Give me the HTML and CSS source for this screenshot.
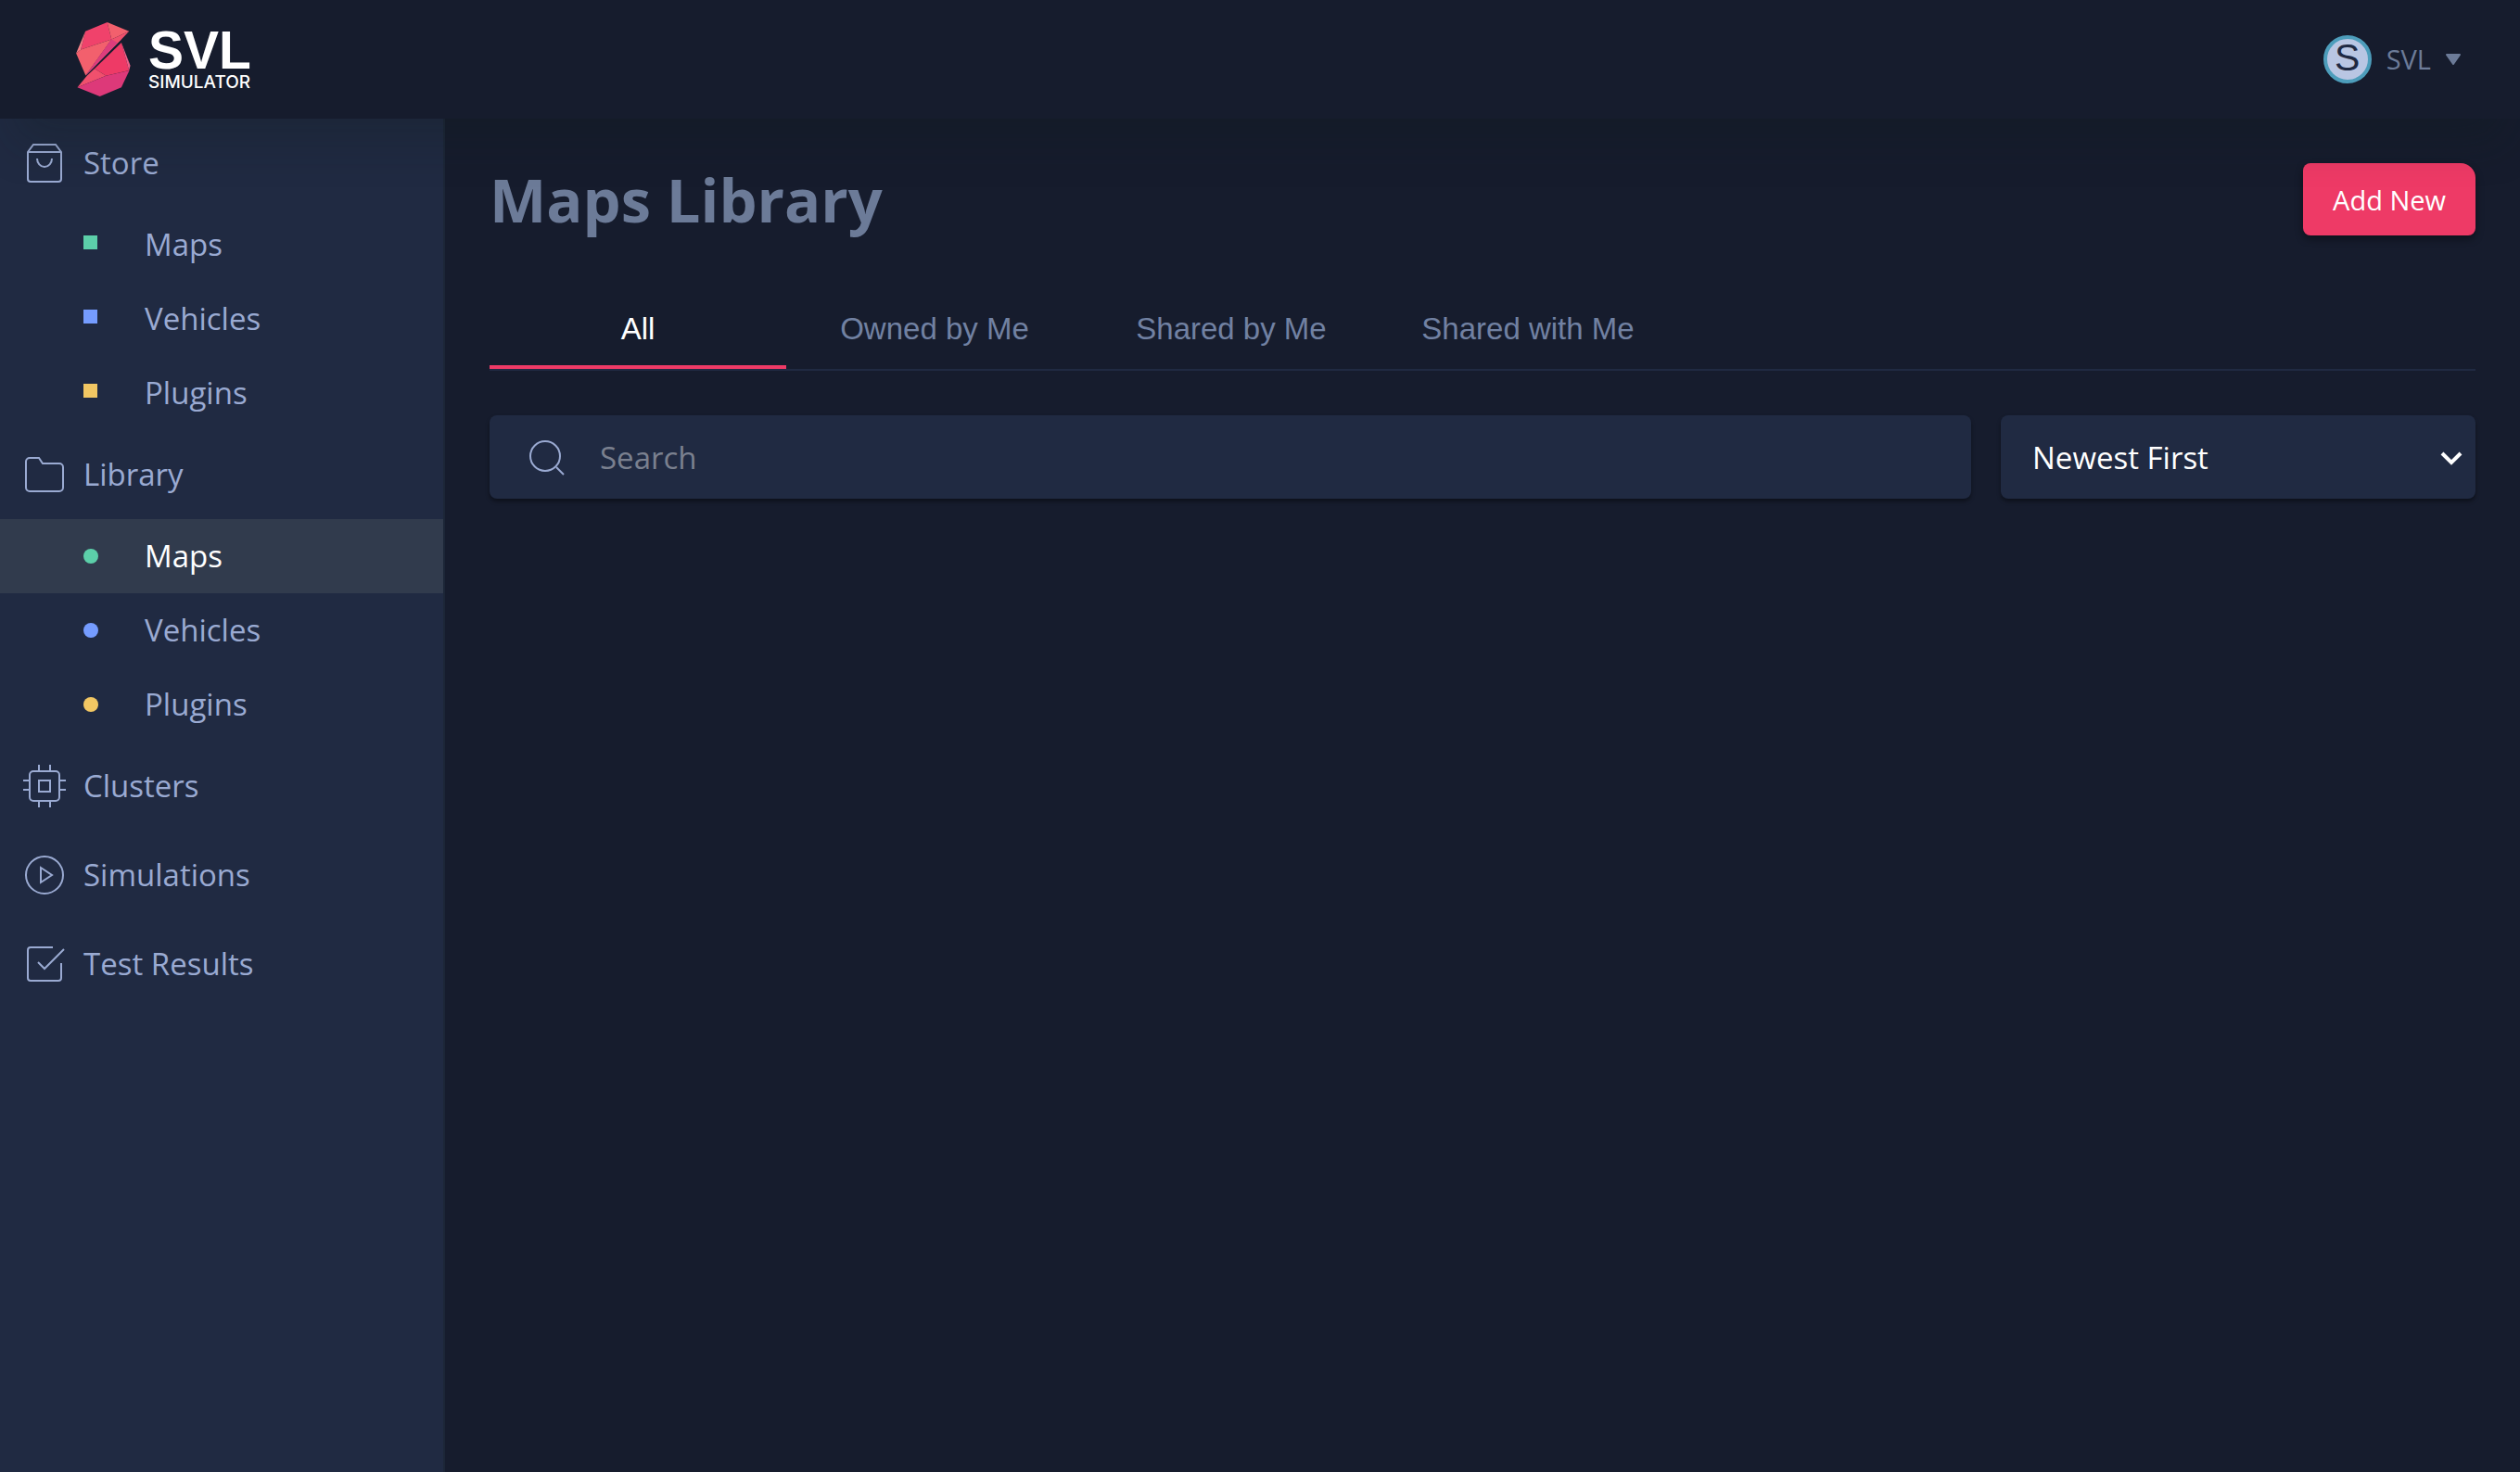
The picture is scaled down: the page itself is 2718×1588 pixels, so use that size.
FILE: index.html
```html
<!DOCTYPE html>
<html lang="en">
<head>
<meta charset="utf-8">
<title>Maps Library - SVL Simulator</title>
<link rel="stylesheet" href="styles.css">
</head>
<body>
<header class="topbar">
  <a class="logo" href="#">
    <svg class="logo-mark" viewBox="65 71 177 241" aria-hidden="true">
      <path fill="#f0426b" d="M95 100 166 71 180 127 80 160z"/>
      <path fill="#f2606d" d="M166 71 237 100 180 127z"/>
      <path fill="#f57f86" d="M95 100 80 160 65 172z"/>
      <path fill="#f2606d" d="M80 160 180 127 96 244 65 172z"/>
      <path fill="#dd3d7c" d="M180 127 212 127 96 244z"/>
      <path fill="#f0506d" d="M180 127 237 100 212 127 150 188z"/>
      <path fill="#dd3d7c" d="M180 127 200 138 96 244z"/>
      <path fill="#ee3a66" d="M212 137 237 228 162 245 125 222z"/>
      <path fill="#f0506d" d="M125 222 162 245 69 283 100 245z"/>
      <path fill="#dd3979" d="M69 283 162 245 238 228 212 283 142 312z"/>
      <path fill="#f0608a" d="M212 137 241 212 237 228z"/>
    </svg>
    <span class="logo-words">
      <span class="logo-name">SVL</span>
      <span class="logo-sub">SIMULATOR</span>
    </span>
  </a>
  <button class="account" type="button">
    <span class="avatar">S</span>
    <span>SVL</span>
    <svg class="caret" viewBox="0 0 16 12" aria-hidden="true"><path d="M1 1h14L8 11z"/></svg>
  </button>
</header>

<div class="shell">
  <nav class="sidebar" aria-label="Main">
    <a class="item" href="#">
      <svg class="icon" viewBox="0 0 48 48" aria-hidden="true"><path d="M6 12 12 4H36L42 12V41a3 3 0 0 1-3 3H9a3 3 0 0 1-3-3zM6 12H42M16 19a8 9 0 0 0 16 0"/></svg>
      Store
    </a>
    <a class="sub" href="#"><span class="mark square green"></span>Maps</a>
    <a class="sub" href="#"><span class="mark square blue"></span>Vehicles</a>
    <a class="sub" href="#"><span class="mark square yellow"></span>Plugins</a>
    <a class="item" href="#">
      <svg class="icon" viewBox="0 0 48 48" aria-hidden="true"><path d="M4 10a4 4 0 0 1 4-4H18L22 12H40a4 4 0 0 1 4 4V38a4 4 0 0 1-4 4H8a4 4 0 0 1-4-4z"/></svg>
      Library
    </a>
    <a class="sub active" href="#" aria-current="page"><span class="mark green"></span>Maps</a>
    <a class="sub" href="#"><span class="mark blue"></span>Vehicles</a>
    <a class="sub" href="#"><span class="mark yellow"></span>Plugins</a>
    <a class="item" href="#">
      <svg class="icon" viewBox="0 0 48 48" aria-hidden="true"><rect x="8" y="8" width="32" height="32" rx="4"/><path d="M18 18H30V30H18zM18 1V8M30 1V8M18 40V47M30 40V47M1 18H8M1 28H8M40 18H47M40 28H47"/></svg>
      Clusters
    </a>
    <a class="item" href="#">
      <svg class="icon" viewBox="0 0 48 48" aria-hidden="true"><circle cx="24" cy="24" r="20"/><path d="M20 16 32 24 20 32z"/></svg>
      Simulations
    </a>
    <a class="item" href="#">
      <svg class="icon" viewBox="0 0 48 48" aria-hidden="true"><path d="M33 6H9a3 3 0 0 0-3 3V39a3 3 0 0 0 3 3H39a3 3 0 0 0 3-3V23M17 22 24 29 45 8"/></svg>
      Test Results
    </a>
  </nav>

  <main class="content">
    <div class="title-row">
      <h1 class="title">Maps Library</h1>
      <button class="add" type="button">Add New</button>
    </div>
    <div class="tabs" role="tablist">
      <button class="tab selected" type="button" role="tab" aria-selected="true">All</button>
      <button class="tab" type="button" role="tab" aria-selected="false">Owned by Me</button>
      <button class="tab" type="button" role="tab" aria-selected="false">Shared by Me</button>
      <button class="tab" type="button" role="tab" aria-selected="false">Shared with Me</button>
    </div>
    <div class="filters">
      <label class="field search">
        <svg class="icon" viewBox="0 0 48 48" aria-hidden="true"><circle cx="22" cy="23" r="16"/><path d="M34 35 42 43"/></svg>
        <input class="search-input" type="search" placeholder="Search" aria-label="Search">
      </label>
      <div class="field sort">
        <select class="sort-select" aria-label="Sort order">
          <option>Newest First</option>
          <option>Oldest First</option>
        </select>
        <svg class="chevron" viewBox="0 0 24 20" aria-hidden="true"><path d="M2 6 12 16 22 6"/></svg>
      </div>
    </div>
  </main>
</div>
</body>
</html>
```
FILE: styles.css
```css
* {
  box-sizing: border-box;
}

body {
  margin: 0;
  min-height: 100vh;
  display: flex;
  flex-direction: column;
  background: #161c2d;
  color: #9aaad2;
  font-family: "Open Sans", "Noto Sans", sans-serif;
  font-size: 33px;
}

a {
  color: inherit;
  text-decoration: none;
}

button,
input,
select {
  border: 0;
  padding: 0;
  background: none;
  color: inherit;
  font: inherit;
  cursor: pointer;
}

/* Top bar */
.topbar {
  position: relative;
  z-index: 1;
  display: flex;
  align-items: center;
  justify-content: space-between;
  height: 128px;
  padding: 0 64px 0 82px;
  background: #161c2d;
  box-shadow: 0 40px 48px -16px rgba(16, 26, 26, 0.25);
}

.logo {
  display: flex;
  align-items: center;
  gap: 19px;
  color: #fff;
}

.logo-mark {
  width: 59px;
  height: 80px;
}

.logo-words {
  display: flex;
  flex-direction: column;
}

.logo-name {
  font: bold 57px/50px "Liberation Sans", Arial, sans-serif;
}

.logo-sub {
  font: 500 19px/20px Inter, sans-serif;
}

.account {
  display: flex;
  align-items: center;
  gap: 16px;
  color: #6c7b98;
  font-size: 29px;
  line-height: 52px;
}

.avatar {
  width: 52px;
  height: 52px;
  border: 4px solid #4d9dbb;
  border-radius: 50%;
  background: #b9c6e3;
  color: #1f2942;
  font: 41px/40px "Liberation Sans", Arial, sans-serif;
  text-align: center;
}

.caret {
  width: 16px;
  height: 12px;
  fill: currentColor;
  stroke: currentColor;
  stroke-width: 2;
  stroke-linejoin: round;
}

/* Page body */
.shell {
  flex: 1;
  display: flex;
}

.sidebar {
  flex: none;
  width: 480px;
  border-right: 2px solid #1c2637;
  background: #202a42;
}

.item,
.sub {
  display: flex;
  align-items: center;
  line-height: 44px;
}

.item {
  height: 96px;
  padding-left: 24px;
  gap: 18px;
}

.sub {
  height: 80px;
  padding-left: 90px;
  gap: 50px;
}

.active {
  background: #313b4d;
  color: #fff;
}

.icon {
  flex: none;
  width: 48px;
  height: 48px;
  fill: none;
  stroke: #9aaad2;
  stroke-width: 2;
}

.mark {
  width: 16px;
  height: 16px;
  border-radius: 50%;
}

.square {
  width: 15px;
  height: 15px;
  margin: 0 1px 5px 0;
  border-radius: 0;
}

.green {
  background: #5ccfa9;
}

.blue {
  background: #759cff;
}

.yellow {
  background: #f2c763;
}

.content {
  flex: 1;
  min-width: 0;
  padding: 48px;
}

.title-row {
  display: flex;
  align-items: center;
  justify-content: space-between;
  height: 78px;
}

.title {
  margin: 0;
  color: #6c7b98;
  font-size: 65px;
  line-height: 78px;
}

.add {
  height: 78px;
  padding: 0 32px;
  border-radius: 8px 16px 8px 8px;
  background: #ee3a66;
  box-shadow: 0 4px 8px rgba(0, 0, 0, 0.4);
  color: #fff;
  font-size: 29px;
}

.tabs {
  display: flex;
  margin-top: 62px;
  border-bottom: 2px solid #202a42;
}

.tab {
  width: 320px;
  height: 82px;
  border-bottom: 4px solid transparent;
  color: #7181a2;
  font-family: "Liberation Sans", Arial, sans-serif;
}

.selected {
  border-color: #ee3a66;
  color: #fff;
}

.filters {
  display: flex;
  gap: 32px;
  margin-top: 48px;
}

.field {
  display: flex;
  align-items: center;
  height: 90px;
  border-radius: 8px;
  background: #202a42;
  box-shadow: 0 3px 4px rgba(0, 0, 0, 0.4);
}

.search {
  flex: 1;
  gap: 33px;
  padding: 0 32px 0 38px;
}

.search-input {
  flex: 1;
  min-width: 0;
  height: 100%;
  outline: 0;
  cursor: text;
}

.search-input::placeholder {
  color: #7a808f;
  opacity: 1;
}

.sort {
  width: 512px;
  padding-right: 14px;
  color: #fff;
}

.sort-select {
  flex: 1;
  height: 100%;
  padding-left: 34px;
  appearance: none;
}

.chevron {
  width: 24px;
  height: 20px;
  fill: none;
  stroke: currentColor;
  stroke-width: 4;
  pointer-events: none;
}
```
